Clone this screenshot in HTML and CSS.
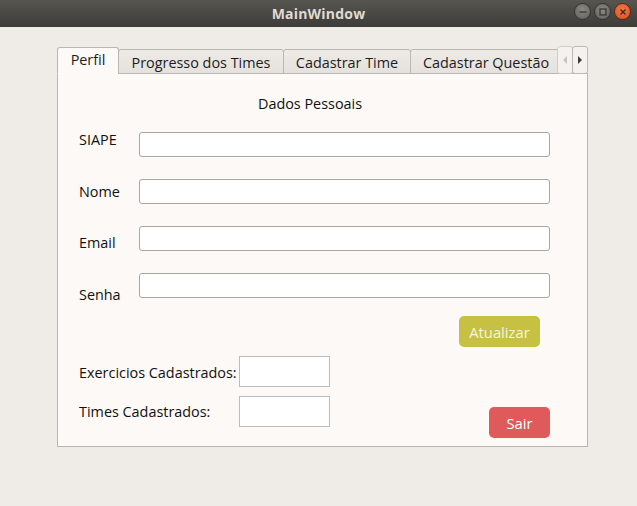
FILE: index.html
```html
<!DOCTYPE html>
<html>
<head>
<meta charset="utf-8">
<link rel="stylesheet" href="styles.css">
</head>
<body>
<div class="titlebar">
  <div class="title">MainWindow</div>
  <div class="wbuttons">
    <span class="wbtn gray"><svg width="10" height="10" viewBox="0 0 10 10"><line x1="1.5" y1="5" x2="8.5" y2="5" stroke="#3a3935" stroke-width="1.4"/></svg></span>
    <span class="wbtn gray"><svg width="10" height="10" viewBox="0 0 10 10"><rect x="2" y="2" width="6" height="6" fill="none" stroke="#3a3935" stroke-width="1.3"/></svg></span>
    <span class="wbtn close"><svg width="10" height="10" viewBox="0 0 10 10"><path d="M2.5 2.5 L7.5 7.5 M7.5 2.5 L2.5 7.5" stroke="#3a2a20" stroke-width="1.4"/></svg></span>
  </div>
</div>
<div class="desk">
  <div class="tabwidget">
    <div class="tabbar">
      <div class="tabs">
        <div class="tab active w1">Perfil</div>
        <div class="tab w2">Progresso dos Times</div>
        <div class="tab w3">Cadastrar Time</div>
        <div class="tab w4">Cadastrar Questão</div>
      </div>
      <div class="scroll left"><svg width="6" height="10" viewBox="0 0 6 10"><path d="M5 1 L1 5 L5 9 Z" fill="#c9c6c2"/></svg></div>
      <div class="scroll right"><svg width="6" height="10" viewBox="0 0 6 10"><path d="M1 1 L5 5 L1 9 Z" fill="#3c3c3c"/></svg></div>
    </div>
    <div class="pane">
      <div class="heading">Dados Pessoais</div>
      <div class="fields">
        <div class="labels">
          <div class="lbl">SIAPE</div>
          <div class="lbl">Nome</div>
          <div class="lbl">Email</div>
          <div class="lbl">Senha</div>
        </div>
        <div class="inputs">
          <div class="input"></div>
          <div class="input"></div>
          <div class="input"></div>
          <div class="input"></div>
        </div>
      </div>
      <div class="actions">
        <div class="btn update">Atualizar</div>
      </div>
      <div class="bottom">
        <div class="stats">
          <div class="slbl">Exercicios Cadastrados:</div>
          <div class="box"></div>
          <div class="slbl">Times Cadastrados:</div>
          <div class="box"></div>
        </div>
        <div class="btn exit">Sair</div>
      </div>
    </div>
  </div>
</div>
</body>
</html>
```

FILE: styles.css
```css
* { box-sizing: border-box; }
html, body { margin: 0; padding: 0; }
body {
  width: 637px;
  height: 506px;
  background: #efebe7;
  font-family: "Open Sans", "Noto Sans", sans-serif;
  font-size: 14.4px;
  color: #111111;
  overflow: hidden;
}
.titlebar {
  height: 27px;
  background: linear-gradient(#57554f, #3d3c38);
  display: flex;
  align-items: center;
  justify-content: center;
  position: relative;
}
.title {
  color: #dfdbd2;
  font-weight: bold;
  font-size: 14px;
  letter-spacing: 0.2px;
}
.wbuttons {
  position: absolute;
  right: 6px;
  top: 3px;
  display: flex;
  gap: 3px;
}
.wbtn {
  width: 17px;
  height: 17px;
  border-radius: 50%;
  display: flex;
  align-items: center;
  justify-content: center;
}
.wbtn.gray {
  background: radial-gradient(circle at 50% 40%, #8a8984, #5f5e5a);
  border: 1px solid #34332f;
}
.wbtn.close {
  background: radial-gradient(circle at 50% 40%, #f47a4a, #df4d1c);
  border: 1px solid #5a2a15;
}
.desk {
  padding: 20px 0 0 57px;
}
.tabwidget {
  width: 531px;
}
.tabbar {
  display: flex;
  align-items: flex-end;
  height: 27px;
  margin-bottom: -1px;
  position: relative;
  z-index: 1;
}
.tabs {
  display: flex;
  align-items: flex-end;
  width: 500px;
  overflow: hidden;
}
.tab {
  flex: none;
  height: 25px;
  border: 1px solid #bab6b1;
  border-radius: 3px 3px 0 0;
  background: linear-gradient(#eeebe7, #e5e2de);
  margin-left: -1px;
  display: flex;
  align-items: center;
  justify-content: center;
  color: #1c1c1c;
  padding-top: 1px;
}
.tab.active {
  height: 27px;
  margin-left: 0;
  background: #fcf9f6;
  border-bottom-color: #fcf9f6;
  padding-top: 0;
  padding-bottom: 2px;
}
.w1 { width: 62px; }
.w2 { width: 166px; }
.w3 { width: 128px; }
.w4 { width: 160px; justify-content: flex-start; padding-left: 12px; }
.scroll {
  flex: none;
  width: 16px;
  height: 28px;
  border: 1px solid #d0cdc9;
  border-radius: 3px;
  background: #f4f2ef;
  display: flex;
  align-items: center;
  justify-content: center;
  align-self: flex-end;
}
.scroll.right { margin-left: -1px; border-color: #bcb9b5; }
.pane {
  height: 374px;
  border: 1px solid #b9b6b1;
  background: #fcf9f6;
  padding: 20px 37px 0 21px;
}
.heading {
  width: 504px;
  margin-left: -21px;
  text-align: center;
  line-height: 20px;
  height: 20px;
}
.fields {
  display: flex;
  align-items: flex-start;
  height: 166px;
  margin-top: 18px;
}
.labels {
  width: 60px;
  display: flex;
  flex-direction: column;
  gap: 31.6px;
  margin-top: -2px;
}
.lbl { line-height: 20px; height: 20px; }
.inputs {
  width: 411px;
  display: flex;
  flex-direction: column;
  gap: 22px;
}
.input {
  height: 25px;
  border: 1px solid #a8a6a3;
  border-radius: 3px;
  background: #ffffff;
}
.actions {
  display: flex;
  justify-content: flex-end;
  margin-top: 18px;
  margin-right: 10px;
}
.btn {
  height: 31px;
  border-radius: 5px;
  display: flex;
  align-items: center;
  justify-content: center;
  font-size: 14.8px;
}
.update {
  width: 81px;
  background: #c6c143;
  color: #f6f4e0;
}
.bottom {
  display: flex;
  justify-content: space-between;
  align-items: flex-end;
  margin-top: 9px;
}
.stats {
  display: grid;
  grid-template-columns: 160px 91px;
  grid-template-rows: 31px 31px;
  row-gap: 9px;
  align-items: center;
  margin-bottom: 11px;
}
.slbl { line-height: 20px; }
.stats .slbl:nth-child(1) { margin-top: 3px; }
.box {
  height: 31px;
  border: 1px solid #bcbcbc;
  background: #ffffff;
}
.exit {
  width: 61px;
  background: #e05a5b;
  color: #ffffff;
}
```
